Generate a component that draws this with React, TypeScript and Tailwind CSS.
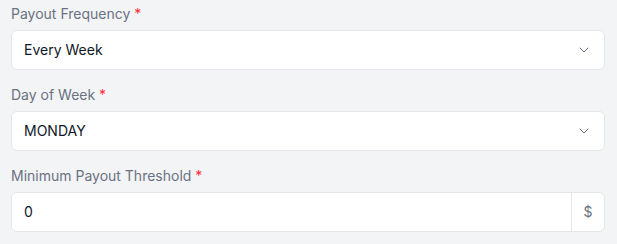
import { ChevronDown } from "lucide-react";

const Label = ({ text }: { text: string }) => (
  <label className="block text-sm leading-5 text-gray-500 mb-1.5">
    {text} <span className="text-red-500">*</span>
  </label>
);

const Select = ({ value }: { value: string }) => (
  <div className="flex items-center justify-between h-10 rounded-md border border-gray-200 bg-white pl-3 pr-3">
    <span className="text-sm text-gray-900">{value}</span>
    <ChevronDown className="w-4 h-4 text-gray-500" strokeWidth={1.5} />
  </div>
);

export default function App() {
  return (
    <div
      className="w-[617px] h-[244px] bg-[#f3f4f6] pl-[11px] pr-[12px] pt-1"
      style={{ fontFamily: "Inter, 'Noto Sans', sans-serif" }}
    >
      <div className="flex flex-col gap-[15px]">
        <div>
          <Label text="Payout Frequency" />
          <Select value="Every Week" />
        </div>
        <div>
          <Label text="Day of Week" />
          <Select value="MONDAY" />
        </div>
        <div>
          <Label text="Minimum Payout Threshold" />
          <div className="flex h-10 rounded-md border border-gray-200 bg-white overflow-hidden">
            <input
              className="flex-1 min-w-0 pl-3 text-sm text-gray-900 outline-none bg-white"
              defaultValue="0"
            />
            <div className="w-[33px] flex items-center justify-center border-l border-gray-200 text-sm text-gray-500">
              $
            </div>
          </div>
        </div>
      </div>
    </div>
  );
}
